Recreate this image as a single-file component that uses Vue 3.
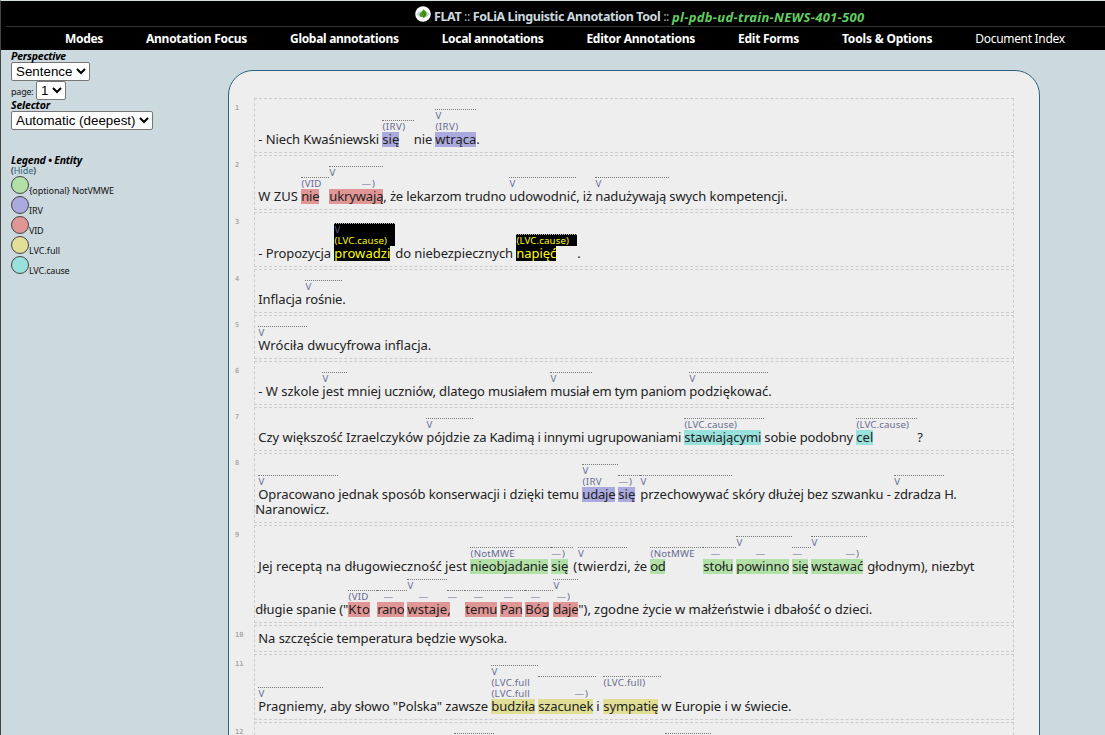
<script setup>
// Stretches or tightens letter spacing so that a label fills its nominal width.
const vFit = {
  mounted(el, { value }) {
    if (!value) return
    const natural = el.getBoundingClientRect().width
    const count = [...el.textContent].length
    if (count) el.style.letterSpacing = (value - natural) / count + 'px'
  }
}

const menu = [
  ['Modes', 38], ['Annotation Focus', 101], ['Global annotations', 108.7], ['Local annotations', 101.7],
  ['Editor Annotations', 108.6], ['Edit Forms', 61], ['Tools & Options', 90.3], ['Document Index', 89.5]
]

const legend = [
  ['{optional} NotVMWE', 85, 'green'], ['IRV', 14, 'violet'], ['VID', 14.5, 'red'],
  ['LVC.full', 31, 'yellow'], ['LVC.cause', 40.5, 'cyan']
]

const labelWidths = {
  'V': 6.5, '(IRV)': 23, '(IRV': 19.5, '(VID': 20, '(LVC.cause)': 52.5, '(LVC.full)': 42, '(LVC.full': 38.5,
  '(NotMWE': 44.5, '—': 10.5, '—)': 14
}

// plain text run
const p = (text, w) => ({ text, w, slot: w })
// annotated token: layers are [label, left offset] pairs, top first
const a = (text, w, slot, color, ...layers) => ({
  text, w, slot, color, layers: layers.map(l => (Array.isArray(l) ? l : [l, 0]))
})

const sentences = [
  [[p('- Niech Kwaśniewski ', 124), a('się', 17, 31.5, 'violet', '(IRV)'), p('nie ', 21.5),
    a('wtrąca', 41, 41, 'violet', 'V', '(IRV)'), p('.', 3)]],
  [[p('W ZUS ', 43), a('nie', 18, 28, 'red', '(VID'), a('ukrywają', 54, 54, 'red', 'V', ['—)', 32]),
    p(', że lekarzom trudno ', 126), a('udowodnić', 67, 67, '', 'V'), p(', iż ', 19),
    a('nadużywają ', 74, 74, '', 'V'), p('swych kompetencji.', 118)]],
  [[p('- Propozycja ', 76), a('prowadzi', 56, 61, 'picked', 'V', '(LVC.cause)'), p('do niebezpiecznych ', 121),
    a('napięć', 40, 61, 'picked', '(LVC.cause)'), p('.', 3)]],
  [[p('Inflacja ', 47), a('rośnie', 37, 37, '', 'V'), p('.', 3.5)]],
  [[a('Wróciła ', 49, 49, '', 'V'), p('dwucyfrowa inflacja.', 124)]],
  [[p('- W szkole ', 64), a('jest ', 25, 25, '', 'V'), p('mniej uczniów, dlatego musiałem ', 203),
    a('musiał ', 42, 42, '', 'V'), p('em tym paniom ', 97), a('podziękować', 79, 79, '', 'V'), p('.', 3)]],
  [[p('Czy większość Izraelczyków ', 168), a('pójdzie ', 47, 47, '', 'V'),
    p('za Kadimą i innymi ugrupowaniami ', 211), a('stawiającymi', 77, 80, 'cyan', '(LVC.cause)'),
    p('sobie podobny ', 92), a('cel', 17, 61, 'cyan', '(LVC.cause)'), p('?', 5)]],
  [[a('Opracowano ', 80, 80, '', 'V'), p('jednak sposób konserwacji i dzięki temu ', 244),
    a('udaje', 33, 36, 'violet', 'V', '(IRV'), a('się', 17, 22, 'violet', '—)'),
    a('przechowywać ', 92, 92, '', 'V'), p('skóry dłużej bez szwanku - ', 161.7),
    a('zdradza ', 50.3, 50.3, '', 'V'), p('H.', 12)],
   [p('Naranowicz.', 74)]],
  [[p('Jej receptą na długowieczność jest ', 212), a('nieobjadanie', 78, 81, 'green', '(NotMWE'),
    a('się', 17, 22, 'green', '—)'), p('(', 4.5), a('twierdzi', 49.5, 49.5, '', 'V'), p(', że ', 23),
    a('od', 15, 53, 'green', '(NotMWE'), a('stołu', 30, 33, 'green', ['—', 7]),
    a('powinno', 53, 56, 'green', 'V', ['—', 19]), a('się', 16, 19, 'green', ['—', 0]),
    a('wstawać', 52, 56, 'green', 'V', ['—)', 34]), p('głodnym), niezbyt', 107)],
   [p('długie spanie ("', 93), a('Kto', 22, 29, 'red', '(VID'), a('rano', 27, 30, 'red', ['—', 6]),
    a('wstaje', 40, 40, 'red', 'V', ['—', 11]), a(',', 3, 18, 'red', ['—', 0]),
    a('temu', 32, 35, 'red', ['—', 8]), a('Pan', 22, 25, 'red', ['—', 3]), a('Bóg', 24, 28, 'red', ['—', 5]),
    a('daje', 25, 25, 'red', 'V', ['—)', 3]), p('"), zgodne życie w małżeństwie i dbałość o dzieci.', 294)]],
  [[p('Na szczęście temperatura będzie wysoka.', 249)]],
  [[a('Pragniemy', 65, 65, '', 'V'), p(', aby słowo "Polska" zawsze ', 168),
    a('budziła', 44, 47, 'yellow', 'V', '(LVC.full', '(LVC.full'),
    a('szacunek', 55, 58, 'yellow', '', ['—)', 36]), p('i ', 7),
    a('sympatię', 55, 58, 'yellow', '(LVC.full)', ''), p('w Europie i w świecie.', 130)]],
  [[p('', 196), a('', 0, 40, '', ''), p('', 171), a('', 0, 46, '', '')]]
]

const annotated = line => line.some(t => t.layers)
</script>

<template>
  <div class="page">
    <header class="header">
      <div class="title">
        <svg class="logo" width="16" height="16" viewBox="0 0 16 16">
          <circle cx="8" cy="8" r="7.8" fill="#fff" />
          <path d="M1 8.3Q4 5 8 4.7Q12.5 5 15 8.3Q12 11.4 8 11.4Q4 11.4 1 8.3Z" fill="#c3d3e6" />
          <path d="M8.2 3.2Q12.5 5.2 11.4 9.4Q10 11 8.6 12.2L7.6 10.8Q4.5 11.4 4.5 8.4Q4.8 6.2 7 5.7Z" fill="#4d9a13" />
          <path d="M8 5.5L10 8.5L8.4 11" fill="none" stroke="#2f7309" stroke-width="1" />
        </svg>
        <span class="name"><span v-fit="235">FLAT <i>::</i> FoLiA Linguistic Annotation Tool <i>::</i></span></span>
        <span class="doc"><span v-fit="192.5">pl-pdb-ud-train-NEWS-401-500</span></span>
      </div>
      <nav class="menu">
        <a v-for="([label, w], i) in menu" :key="i" :class="{ light: i === 7 }" :style="{ width: w + 'px' }"><span v-fit="w">{{ label }}</span></a>
      </nav>
    </header>

    <div class="body">
      <aside class="side">
        <h2><span v-fit="55">Perspective</span></h2>
        <div class="select sentence-select">
          <span v-fit="56.5">Sentence</span>
          <svg width="10" height="7" viewBox="0 0 10 7"><path d="M1 1L5 5L9 1" /></svg>
        </div>
        <div class="pager">
          <label><span v-fit="22.5">page:</span></label>
          <div class="select">
            <span>1</span>
            <svg width="10" height="7" viewBox="0 0 10 7"><path d="M1 1L5 5L9 1" /></svg>
          </div>
        </div>
        <h2><span v-fit="39">Selector</span></h2>
        <div class="select deep-select">
          <span v-fit="119.5">Automatic (deepest)</span>
          <svg width="10" height="7" viewBox="0 0 10 7"><path d="M1 1L5 5L9 1" /></svg>
        </div>
        <h2 class="legend-title"><span v-fit="71">Legend • Entity</span></h2>
        <div class="hide"><span v-fit="25">(<a>Hide</a>)</span></div>
        <div v-for="[label, w, color] in legend" :key="label" class="entry">
          <span class="dot" :class="color"></span><span class="entry-label"><span v-fit="w">{{ label }}</span></span>
        </div>
      </aside>

      <main class="document">
        <section v-for="(lines, n) in sentences" :key="n" class="row">
          <span class="number">{{ n + 1 }}</span>
          <div class="sentence">
            <div v-for="(line, k) in lines" :key="k" class="line" :class="{ annotated: annotated(line), first: k === 0 }">
              <div v-for="(t, j) in line" :key="j" class="token" :class="{ chosen: t.color === 'picked' }" :style="{ width: t.slot + 'px' }">
                <div v-if="t.layers" class="layers">
                  <div v-for="([label, off], m) in t.layers" :key="m" class="layer" :class="{ pos: label === 'V' }" :style="{ paddingLeft: off + 0.5 + 'px' }">
                    <span v-fit="labelWidths[label]">{{ label }}</span>
                  </div>
                </div>
                <div class="word" :class="t.color" :style="{ width: t.w + 'px' }"><span v-fit="t.w">{{ t.text }}</span></div>
              </div>
            </div>
          </div>
        </section>
      </main>
    </div>
  </div>
</template>

<style>
html, body { margin: 0; overflow: hidden; background: #ccd9df; }
</style>

<style scoped>
.page {
  box-sizing: border-box;
  width: 1105px;
  height: 735px;
  overflow: hidden;
  border-top: 1px solid #d9e0e1;
  border-left: 1px solid #444;
  background: #ccd9df;
  font-family: "Noto Sans", "Open Sans", sans-serif;
  color: #222;
}
span { display: inline-block; white-space: pre; }
.header { height: 49px; background: #000; }
.title {
  display: flex;
  height: 25px;
  margin-left: 5px;
  padding-left: 409px;
  border-bottom: 1px solid #333;
  font-size: 12.5px;
  font-weight: 700;
  line-height: 16px;
}
.logo { margin-top: 5px; flex: none; }
.name { width: 238px; margin: 8px 0 0 3px; color: #ccd9df; }
.name i { font-style: normal; font-weight: 400; color: #aab4b9; }
.doc { margin-top: 8px; font-size: 13px; color: #60cf60; font-style: italic; }
.menu { display: flex; gap: 43px; padding: 4px 0 0 64px; font-size: 12px; line-height: 16px; font-weight: 700; color: #fff; }
.menu a { flex: none; white-space: nowrap; }
.menu .light { font-weight: 400; }
.body { display: flex; align-items: flex-start; }
.side { width: 217px; padding-left: 10px; font-size: 9px; color: #111; }
h2 { margin: 0; height: 12px; font-size: 10.5px; line-height: 12px; font-weight: 700; font-style: italic; color: #000; }
.select {
  display: flex;
  justify-content: space-between;
  align-items: center;
  box-sizing: border-box;
  height: 19px;
  padding: 0 3px 0 4px;
  border: 1px solid #767676;
  border-radius: 2px;
  background: #fff;
  color: #000;
  font-family: "Liberation Sans", Arial, sans-serif;
  font-size: 13.333px;
  line-height: 17px;
}
.select svg { flex: none; fill: none; stroke: #000; stroke-width: 2; }
.sentence-select { width: 79px; }
.pager { display: flex; height: 18px; gap: 3px; }
.pager label { width: 22px; padding-top: 5px; line-height: 12px; }
.pager .select { width: 30px; }
.deep-select { width: 142px; }
.legend-title { margin-top: 24px; }
.hide { height: 10px; line-height: 10px; }
.hide a { color: #2f6680; }
.entry { display: flex; height: 20px; }
.dot { box-sizing: border-box; width: 18px; height: 18px; border: 1px solid #444; border-radius: 50%; }
.entry-label { padding-top: 9px; line-height: 12px; }
.document {
  box-sizing: border-box;
  width: 812px;
  height: 760px;
  margin-top: 20px;
  padding: 27px 0 0 6px;
  border: 1px solid #2b637d;
  border-radius: 25px;
  background: #eee;
}
.row { display: flex; margin-bottom: 2px; }
.number { width: 19px; padding-top: 5px; font: bold 7px/10px "DejaVu Sans Mono", monospace; color: #aaa; }
.sentence { box-sizing: border-box; width: 760px; padding: 5px 0; border: 1px dashed #ccc; }
.line { display: flex; align-items: flex-end; min-height: 15px; }
.line.annotated { padding-top: 5px; }
.line.first { padding-left: 3px; }
.token { flex: none; }
.layers { border-top: 1px dotted #777; }
.layer { box-sizing: border-box; height: 11px; font-size: 9.7px; line-height: 11px; color: #686c92; white-space: nowrap; }
.word { height: 15px; font-size: 13px; line-height: 15px; text-indent: 0.3px; white-space: nowrap; }
.word span { text-indent: 0; }
.chosen .layers { background: #000; border-top-color: #bbb; }
.chosen .layer { color: #ff0; }
.chosen .layer.pos { color: #55587a; }
.violet { background: #aaaadf; }
.red { background: #e19696; }
.green { background: #b2e1a8; }
.yellow { background: #e1df96; }
.cyan { background: #98e1dc; }
.picked { background: #000; color: #ff0; }
</style>
